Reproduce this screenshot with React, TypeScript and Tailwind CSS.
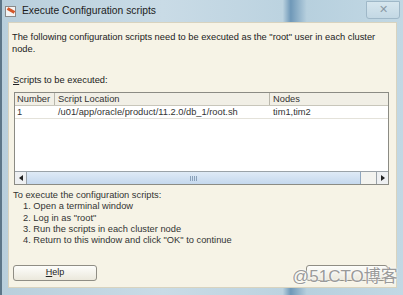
import React from "react";

const font = { fontFamily: '"Liberation Sans", Arial, sans-serif' };

export default function App() {
  return (
    <div
      className="relative w-[403px] h-[295px] overflow-hidden flex flex-col bg-[linear-gradient(90deg,#b9cfdc_0%,#c9dbe6_40%,#bcd3e0_70%,#6f98b8_72%,#b7d0de_76%,#c2d8e4_100%)] border-l-2 border-[#5d7688]"
      style={font}
    >
      {/* title bar */}
      <div className="h-[22px] flex items-center pl-[3px] shrink-0">
        <div className="w-[11px] h-[11px] bg-[#f4f4f4] border border-[#8a8a8a] relative overflow-hidden">
          <div className="absolute left-[1px] top-[2px] w-[8px] h-[3px] bg-[#d4572a] rotate-[30deg]" />
        </div>
        <span className="ml-[6px] text-[10.3px] text-[#1c1c1c]">Execute Configuration scripts</span>
        <div className="ml-auto mr-[3px] mb-[3px] w-[34px] h-[18px] rounded-b-[3px] border border-[#9fb8c8] bg-[linear-gradient(180deg,#d6e6ee,#c3d8e4)] flex items-center justify-center text-[11px] text-[#8a9aa6] leading-none">
          ✕
        </div>
      </div>

      {/* content */}
      <div className="flex-1 ml-[6px] mr-[6px] mb-[7px] bg-[#f6f3e6] border border-[#d8d3bf] flex flex-col text-[9.3px] text-[#222]">
        <p className="mt-[8px] ml-[3px] leading-[12px]">
          The following configuration scripts need to be executed as the "root" user in each cluster
          <br />
          node.
        </p>

        <p className="mt-[19px] ml-[4px] leading-[12px]">
          <span className="underline">S</span>cripts to be executed:
        </p>

        {/* table */}
        <div className="mt-[6px] ml-[5px] mr-[7px] h-[93px] bg-white border border-[#8b8b84] flex flex-col">
          <div className="flex h-[13px] border-b border-[#c8c6bb] bg-[#f1efe6] text-[#333] leading-[12px]">
            <div className="w-[40px] pl-[2px] border-r border-[#b9b7ac]">Number</div>
            <div className="w-[215px] pl-[3px] border-r border-[#b9b7ac]">Script Location</div>
            <div className="flex-1 pl-[3px]">Nodes</div>
          </div>
          <div className="flex h-[13px] border-b border-[#e4e2da] leading-[12px] text-[#333]">
            <div className="w-[40px] pl-[2px]">1</div>
            <div className="w-[215px] pl-[3px]">/u01/app/oracle/product/11.2.0/db_1/root.sh</div>
            <div className="flex-1 pl-[3px]">tim1,tim2</div>
          </div>
          <div className="flex-1" />
          {/* horizontal scrollbar */}
          <div className="h-[13px] flex border-t border-[#9aa2a8]">
            <div className="w-[12px] flex items-center justify-center bg-[#eef0f2] border-r border-[#9aa2a8]">
              <div className="w-0 h-0 border-y-[3px] border-y-transparent border-r-[4px] border-r-[#222]" />
            </div>
            <div className="w-[334px] bg-[linear-gradient(180deg,#dfeaf6,#c5d8ee)] border-r border-[#8fa6bf] flex items-center justify-center">
              <div className="w-[8px] h-[5px] bg-[repeating-linear-gradient(90deg,#8aa1ba_0_1px,transparent_1px_2px)]" />
            </div>
            <div className="flex-1 bg-[#f3f3ef]" />
            <div className="w-[12px] flex items-center justify-center bg-[#eef0f2] border-l border-[#9aa2a8]">
              <div className="w-0 h-0 border-y-[3px] border-y-transparent border-l-[4px] border-l-[#222]" />
            </div>
          </div>
        </div>

        <div className="mt-[5px] ml-[4px] leading-[11.3px] text-[#333]">
          <div>To execute the configuration scripts:</div>
          <div className="pl-[10px]">1. Open a terminal window</div>
          <div className="pl-[10px]">2. Log in as "root"</div>
          <div className="pl-[10px]">3. Run the scripts in each cluster node</div>
          <div className="pl-[10px]">4. Return to this window and click "OK" to continue</div>
        </div>

        <div className="mt-auto mb-[6px] flex justify-between px-[4px]">
          <div className="w-[84px] h-[16px] rounded-[3px] border border-[#8f8d84] bg-[linear-gradient(180deg,#fdfdfb,#ebe8dc)] flex items-center justify-center text-[9px] text-[#222]">
            <span><span className="underline">H</span>elp</span>
          </div>
          <div className="mr-[4px] w-[82px] h-[16px] rounded-[3px] border border-[#8f8d84] bg-[linear-gradient(180deg,#fdfdfb,#ebe8dc)]" />
        </div>
      </div>

      {/* watermark */}
      <div
        className="absolute left-[290px] top-[268px] text-[17px] leading-none text-[#9a9a9a] [text-shadow:0_0_2px_#fff,0_0_2px_#fff]"
        style={{ fontFamily: '"Liberation Sans", "Noto Sans CJK SC", sans-serif' }}
      >
        @51CTO博客
      </div>
    </div>
  );
}
